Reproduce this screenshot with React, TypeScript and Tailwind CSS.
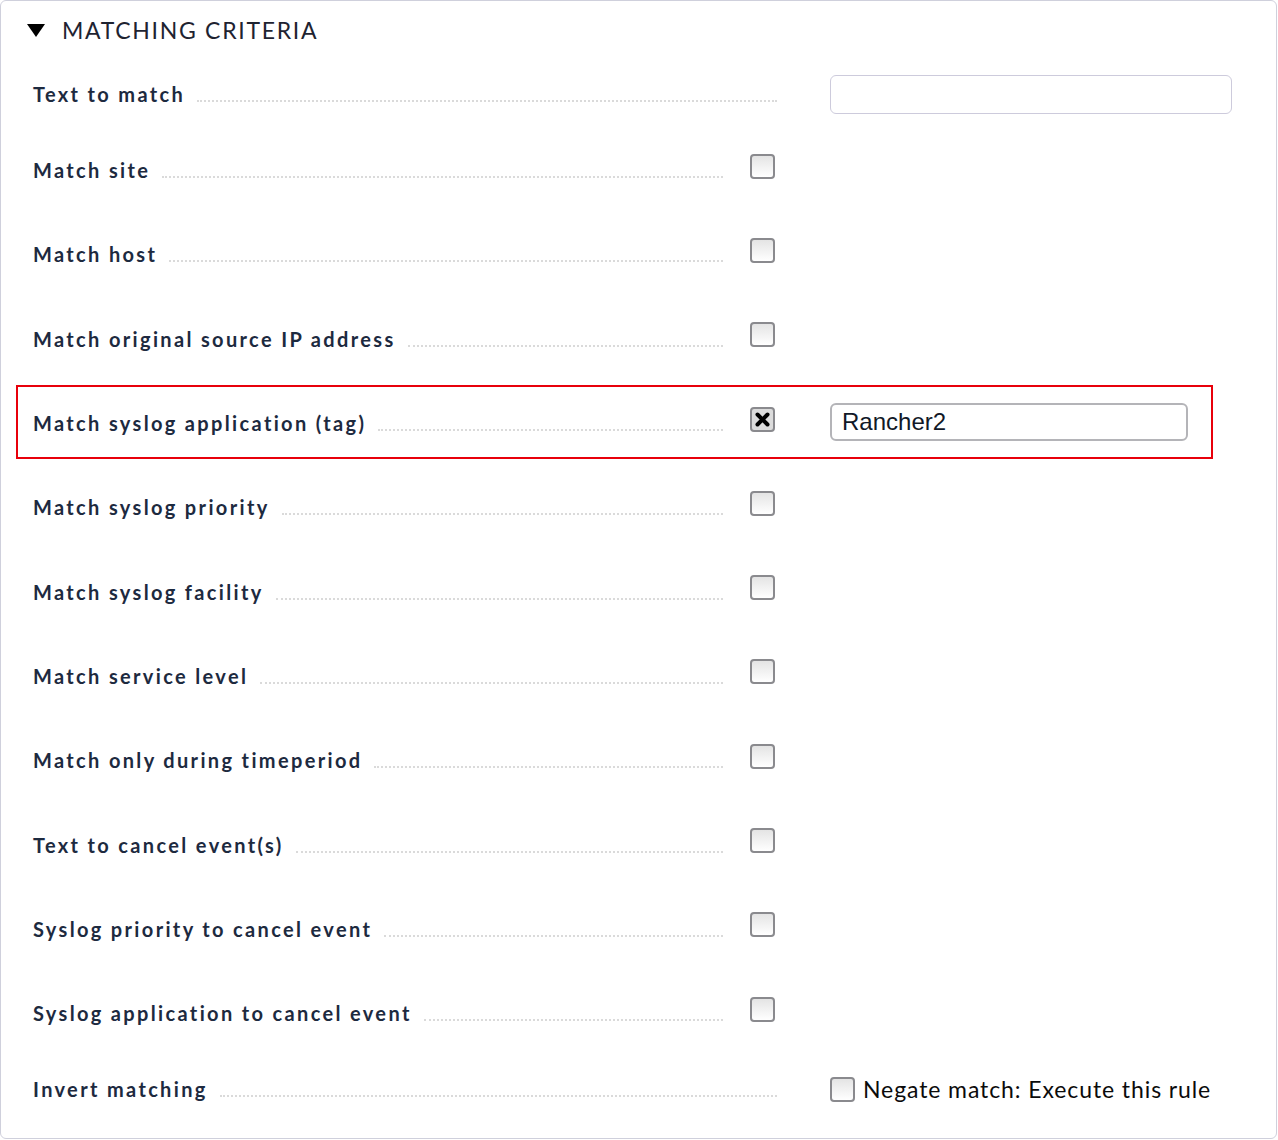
import React from 'react';

const rows = [
  'Match site',
  'Match host',
  'Match original source IP address',
  'Match syslog application (tag)',
  'Match syslog priority',
  'Match syslog facility',
  'Match service level',
  'Match only during timeperiod',
  'Text to cancel event(s)',
  'Syslog priority to cancel event',
  'Syslog application to cancel event',
];

function Checkbox({ checked = false }: { checked?: boolean }) {
  return (
    <span
      className={`flex h-[25px] w-[25px] shrink-0 items-center justify-center rounded-[4px] border-2 border-[#8a8a8e] ${
        checked ? 'bg-[#dcdcdc]' : 'bg-gradient-to-b from-[#e4e4e4] to-white'
      }`}
    >
      {checked && (
        <svg width="15" height="15" viewBox="0 0 15 15">
          <path d="M2.5 2.5 L12.5 12.5 M12.5 2.5 L2.5 12.5" stroke="#000" strokeWidth="4" strokeLinecap="round" />
        </svg>
      )}
    </span>
  );
}

function Label({ text, width }: { text: string; width: string }) {
  return (
    <div className={`flex items-baseline ${width}`}>
      <span className="whitespace-nowrap text-[20px] font-bold tracking-[2.35px] text-[#1d2a3f]">{text}</span>
      <span className="mb-[2px] ml-[12px] flex-1 border-b-2 border-dotted border-[#dadada]" />
    </div>
  );
}

export default function App() {
  return (
    <div className="bg-white" style={{ fontFamily: 'Lato, "Noto Sans", sans-serif' }}>
      <div className="flex h-[1139px] w-[1277px] flex-col rounded-[6px] border border-[#cfd0dc] bg-white">
        <div className="flex h-[61px] items-center pl-[26px] pb-[3px]">
          <svg width="18" height="14" viewBox="0 0 18 14">
            <path d="M0 1 L18 1 L9 14 Z" fill="#000" />
          </svg>
          <span className="ml-[17px] text-[23px] tracking-[1.7px] text-[#1e2331]">MATCHING CRITERIA</span>
        </div>

        <div className="flex h-[66px] items-center pl-[32px] pb-[2px]">
          <Label text="Text to match" width="w-[744px]" />
          <div className="ml-[53px] h-[39px] w-[402px] rounded-[6px] border border-[#cdcbdc] bg-white" />
        </div>

        {rows.map((label, i) => {
          const checked = i === 3;
          return (
            <div key={label} className="relative flex h-[84.3px] items-center pl-[32px]">
              <Label text={label} width="w-[690px]" />
              <div className="ml-[27px] -mt-[8px]">
                <Checkbox checked={checked} />
              </div>
              {checked && (
                <div className="-mt-[3px] ml-[55px] flex h-[38px] w-[358px] items-center rounded-[6px] border-2 border-[#b4b4b8] bg-white px-[10px]">
                  <span className="text-[24px] text-[#111827]" style={{ fontFamily: '"Liberation Sans", Arial, sans-serif' }}>
                    Rancher2
                  </span>
                </div>
              )}
              {checked && (
                <div className="pointer-events-none absolute left-[15px] top-[4px] h-[74px] w-[1197px] border-2 border-[#e8000b]" />
              )}
            </div>
          );
        })}

        <div className="flex h-[68px] items-center pl-[32px]">
          <Label text="Invert matching" width="w-[744px]" />
          <div className="ml-[53px] flex items-center">
            <span className="h-[25px] w-[25px] rounded-[4px] border-2 border-[#8a8a8e] bg-gradient-to-b from-[#e4e4e4] to-white" />
            <span className="ml-[8px] text-[23px] tracking-[0.9px] text-[#0b0b0b]">Negate match: Execute this rule</span>
          </div>
        </div>
      </div>
    </div>
  );
}
